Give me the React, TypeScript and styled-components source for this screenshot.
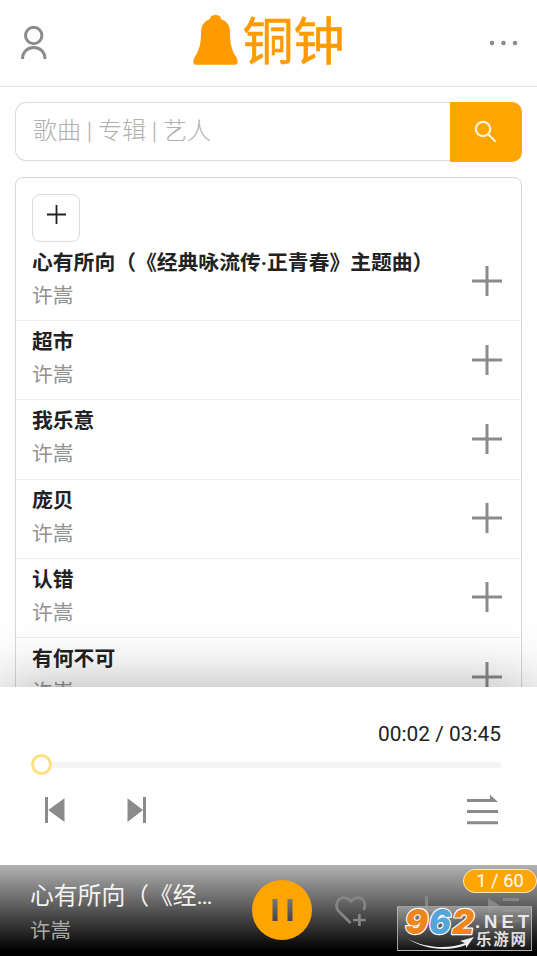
import React from "react";
import styled, { createGlobalStyle } from "styled-components";

const GlobalStyle = createGlobalStyle`
  * { box-sizing: border-box; }
  body { margin: 0; background: #fff; overflow: hidden; }
  button { padding: 0; font: inherit; cursor: pointer; }
  svg { display: block; overflow: visible; flex: none; }
`;

const Screen = styled.div`
  width: 537px;
  height: 956px;
  display: flex;
  flex-direction: column;
  overflow: hidden;
  background: #fefefe;
  font-family: Roboto, "Noto Sans CJK SC", sans-serif;
  text-spacing-trim: space-all;
  color: #222;
`;

const Header = styled.header`
  flex: none;
  height: 87px;
  border-bottom: 1px solid #e2e2e2;
  display: grid;
  grid-template-columns: 1fr auto 1fr;
  padding: 0 19px 0 20px;
`;

const HeaderButton = styled.button<{ $end?: boolean }>`
  border: 0;
  background: none;
  color: #8b8b8b;
  display: flex;
  align-items: center;
  justify-content: ${(p) => (p.$end ? "flex-end" : "flex-start")};
`;

const Brand = styled.div`
  display: flex;
  align-items: flex-start;
  padding-top: 14px;
  color: #ff9a00;
`;

const BrandName = styled.span`
  margin: -6px 0 0 4px;
  font: 400 51px/60px "Noto Sans CJK SC", sans-serif;
  -webkit-text-stroke: 0.6px currentColor;
`;

const Main = styled.main`
  flex: 1;
  min-height: 0;
  overflow: hidden;
  padding: 15px 15px 0;
`;

const SearchBar = styled.form`
  display: flex;
  height: 60px;
  margin-bottom: 15px;
`;

const SearchInput = styled.input`
  flex: 1;
  min-width: 0;
  height: 59px;
  border: 1px solid #dcdcdc;
  border-right: 0;
  border-radius: 11px 0 0 11px;
  padding: 0 17px 1px;
  background: #fff;
  font: 300 24px Roboto, "Noto Sans CJK SC", sans-serif;
  outline: none;
  &::placeholder { color: #b0b0b0; opacity: 1; }
`;

const SearchButton = styled.button`
  width: 72px;
  height: 60px;
  border: 0;
  border-radius: 0 10px 10px 0;
  background: #ffa500;
  display: flex;
  align-items: center;
  justify-content: center;
`;

const SongCard = styled.section`
  border: 1px solid #d3d8dc;
  border-radius: 8px 8px 0 0;
  padding-top: 16px;
  background: #fff;
`;

const AddAllButton = styled.button`
  display: flex;
  align-items: center;
  justify-content: center;
  width: 48px;
  height: 48px;
  margin-left: 16px;
  padding-bottom: 7px;
  border: 1px solid #dcdcdc;
  border-radius: 8px;
  background: #fff;
  color: #222;
`;

const SongRow = styled.div`
  height: 79.2px;
  border-bottom: 1px solid #eee;
  padding: 5px 19px 0 16px;
  display: flex;
  justify-content: space-between;
  align-items: center;
`;

const SongText = styled.div`
  align-self: flex-start;
`;

const SongTitle = styled.div`
  padding-top: 1px;
  font-size: 20.8px;
  line-height: 31px;
  font-weight: 700;
  white-space: nowrap;
`;

const SongArtist = styled.div`
  margin-top: 2px;
  font-size: 20.7px;
  line-height: 31px;
  font-weight: 400;
  color: #929292;
`;

const RowAdd = styled.button`
  border: 0;
  background: none;
  color: #8b8b8b;
  margin-bottom: 6px;
`;

const Player = styled.section`
  position: relative;
  flex: none;
  height: 178px;
  padding: 31px 36px 0 31px;
  background: #fff;
  box-shadow: 0 0 58px rgba(0, 0, 0, 0.33);
`;

const Time = styled.div`
  text-align: right;
  font-size: 20.9px;
  line-height: 32px;
  color: #222;
`;

const Seek = styled.div`
  display: flex;
  align-items: center;
  height: 21px;
  margin-top: 4px;
`;

const SeekThumb = styled.div`
  width: 21px;
  height: 21px;
  border: 3px solid #ffdf86;
  border-radius: 50%;
  background: #fff;
`;

const SeekTrack = styled.div`
  flex: 1;
  height: 6px;
  border-radius: 0 3px 3px 0;
  background: #f3f3f3;
`;

const Controls = styled.div`
  display: flex;
  align-items: center;
  height: 48px;
  margin-top: 11px;
  padding: 0 3px 0 13px;
  gap: 61px;
`;

const ControlButton = styled.button<{ $last?: boolean }>`
  border: 0;
  background: none;
  color: #8b8b8b;
  margin-left: ${(p) => (p.$last ? "auto" : "0")};
`;

const NowPlaying = styled.footer`
  position: relative;
  flex: none;
  height: 91px;
  display: flex;
  padding-left: 30px;
  background: linear-gradient(#b2b2b2 0, #000 94%);
`;

const NowText = styled.div`
  width: 184px;
  padding-top: 14px;
`;

const NowTitle = styled.div`
  font-size: 23.8px;
  line-height: 34px;
  font-weight: 400;
  color: #f4f4f4;
  white-space: nowrap;
  overflow: hidden;
  text-overflow: ellipsis;
`;

const NowArtist = styled.div`
  margin-top: 3px;
  font-size: 20.5px;
  line-height: 31px;
  font-weight: 400;
  color: #a9a9a9;
`;

const PauseButton = styled.button`
  width: 60px;
  height: 60px;
  margin: 15px 0 0 38px;
  border: 0;
  border-radius: 50%;
  background: #ffa500;
  display: flex;
  align-items: center;
  justify-content: center;
`;

const FavButton = styled.button`
  align-self: flex-start;
  margin: 31px 0 0 23px;
  border: 0;
  background: none;
`;

const QueueIcons = styled.div`
  margin: 31px 0 0 46px;
`;

const QueueBadge = styled.div`
  position: absolute;
  top: 4px;
  right: 0;
  width: 74px;
  height: 24px;
  border: 1.5px solid #ffe9bd;
  border-radius: 12px;
  background: #ffa500;
  color: #fff;
  font-size: 18.3px;
  line-height: 22px;
  text-align: center;
`;

const Watermark = styled.div`
  position: absolute;
  left: 397px;
  top: 41px;
  width: 135px;
  height: 45px;
  border: 1px solid rgba(190, 190, 190, 0.8);
  background: linear-gradient(rgba(162, 162, 162, 0.85), rgba(22, 22, 22, 0.85));
`;

const songs = [
  "心有所向（《经典咏流传·正青春》主题曲）",
  "超市",
  "我乐意",
  "庞贝",
  "认错",
  "有何不可",
];

const PlusIcon = ({ size, stroke }: { size: number; stroke: number }) => (
  <svg width={size} height={size} viewBox={`0 0 ${size} ${size}`} stroke="currentColor" strokeWidth={stroke}>
    <path d={`M0 ${size / 2}H${size}M${size / 2} 0V${size}`} />
  </svg>
);

const UserIcon = () => (
  <svg width="28" height="34" viewBox="0 0 28 34" fill="none" stroke="currentColor" strokeWidth="3">
    <circle cx="13.7" cy="9.5" r="8.2" />
    <path d="M2.5 33C2.5 17.5 25 17.5 25 33" />
  </svg>
);

const MoreIcon = () => (
  <svg width="29" height="6" viewBox="0 0 29 6" fill="currentColor">
    <circle cx="3" cy="3" r="2.3" />
    <circle cx="14.5" cy="3" r="2.3" />
    <circle cx="26" cy="3" r="2.3" />
  </svg>
);

const BellIcon = () => (
  <svg width="45" height="51" viewBox="0 0 45 51" fill="currentColor">
    <path d="M17 5C17 2.5 19 1 22.5 1S28 2.5 28 5C34 7 37 12 37 18C37 29 38 35 43.5 43.5C45.5 47.5 45 50.8 41.5 50.8H3.5C0 50.8-.5 47.5 1.5 43.5C7 35 8 29 8 18C8 12 11 7 17 5Z" />
  </svg>
);

const SearchIcon = () => (
  <svg width="22" height="22" viewBox="0 0 22 22" fill="none" stroke="#fff3d6" strokeWidth="2.2">
    <circle cx="8" cy="8" r="7.2" />
    <path d="M13 13L20.7 20.7" />
  </svg>
);

const PreviousIcon = () => (
  <svg width="21" height="26" viewBox="0 0 21 26" fill="currentColor">
    <path d="M1 0H4V26H1ZM20.5 1.3V25L4.2 13Z" />
  </svg>
);

const NextIcon = () => (
  <svg width="21" height="26" viewBox="0 0 21 26" fill="currentColor">
    <path d="M17 0H20V26H17ZM1.5 1.3V25L17 13Z" />
  </svg>
);

const PlaylistOrderIcon = () => (
  <svg width="31" height="30" viewBox="0 0 31 30" fill="currentColor">
    <path d="M0 4H23V-.3L31 6.9H0ZM0 15H31V18H0ZM0 26.2H31V29.2H0Z" />
  </svg>
);

const HeartPlusIcon = () => (
  <svg width="32" height="32" viewBox="0 0 32 32" fill="none" stroke="#858585" strokeWidth="2.7">
    <path d="M15.6 27L4.2 15.8C-1.4 9.6 2.8 1.7 9 1.7C11.8 1.7 13.9 2.9 16 5.3C18.1 2.9 20.6 1.7 23.2 1.7C28.8 1.7 31.4 8 28.7 14" />
    <path d="M18 24H30.8M24.4 17.9V30" />
  </svg>
);

const App = () => (
  <>
    <GlobalStyle />
    <Screen>
      <Header>
        <HeaderButton aria-label="用户"><UserIcon /></HeaderButton>
        <Brand>
          <BellIcon />
          <BrandName>铜钟</BrandName>
        </Brand>
        <HeaderButton $end aria-label="更多"><MoreIcon /></HeaderButton>
      </Header>

      <Main>
        <SearchBar onSubmit={(e) => e.preventDefault()}>
          <SearchInput placeholder="歌曲 | 专辑 | 艺人" />
          <SearchButton aria-label="搜索"><SearchIcon /></SearchButton>
        </SearchBar>
        <SongCard>
          <AddAllButton aria-label="全部添加"><PlusIcon size={19} stroke={1.8} /></AddAllButton>
          {songs.map((title) => (
            <SongRow key={title}>
              <SongText>
                <SongTitle>{title}</SongTitle>
                <SongArtist>许嵩</SongArtist>
              </SongText>
              <RowAdd aria-label="添加"><PlusIcon size={30} stroke={3} /></RowAdd>
            </SongRow>
          ))}
        </SongCard>
      </Main>

      <Player>
        <Time>00:02 / 03:45</Time>
        <Seek>
          <SeekThumb />
          <SeekTrack />
        </Seek>
        <Controls>
          <ControlButton aria-label="上一首"><PreviousIcon /></ControlButton>
          <ControlButton aria-label="下一首"><NextIcon /></ControlButton>
          <ControlButton $last aria-label="播放顺序"><PlaylistOrderIcon /></ControlButton>
        </Controls>
      </Player>

      <NowPlaying>
        <NowText>
          <NowTitle>心有所向（《经典咏流传·正青春》主题曲）</NowTitle>
          <NowArtist>许嵩</NowArtist>
        </NowText>
        <PauseButton aria-label="暂停">
          <svg width="21" height="22" viewBox="0 0 21 22">
            <defs>
              <linearGradient id="pause" x1="0" y1="0" x2="0" y2="1">
                <stop offset="0" stopColor="#777" />
                <stop offset="1" stopColor="#444" />
              </linearGradient>
            </defs>
            <path d="M.5 0H5.5V22H.5ZM15.5 0H20.5V22H15.5Z" fill="url(#pause)" />
          </svg>
        </PauseButton>
        <FavButton aria-label="收藏"><HeartPlusIcon /></FavButton>
        <QueueIcons>
          <svg width="110" height="31" viewBox="0 0 110 31" fill="#868686">
            <path d="M12 0H15V13H30V16H15V30H12V16H-2V13H12ZM75 2L87 9.5L75 17ZM90 2H106V5H90ZM90 13H106V16H90ZM75 24H106V27H75Z" />
          </svg>
        </QueueIcons>
        <QueueBadge>1 / 60</QueueBadge>
        <Watermark>
          <svg width="133" height="43" viewBox="0 0 133 43">
            <path d="M8 31C29 42 51 42 67 36L62 34L76 30L68 41L68 38C50 45 27 43 8 31Z" fill="#eee" />
            <g fontFamily="Inter, sans-serif" fontWeight="900" fontStyle="italic" fontSize="34" stroke="#fff" strokeWidth="2.4" strokeLinejoin="round" paintOrder="stroke">
              <text x="7" y="27" textLength="23" lengthAdjust="spacingAndGlyphs" fill="#ef851d">9</text>
              <text x="31" y="27" textLength="22" lengthAdjust="spacingAndGlyphs" fill="#55a5db">6</text>
              <text x="54" y="27" textLength="22" lengthAdjust="spacingAndGlyphs" fill="#ef851d">2</text>
            </g>
            <text x="77" y="21" fontFamily="Liberation Sans" fontWeight="700" fontSize="18.5" textLength="54" lengthAdjust="spacing" fill="#e8e8e8">.NET</text>
            <text x="78" y="38" fontFamily="Noto Sans CJK SC" fontWeight="700" fontSize="15.5" textLength="50" lengthAdjust="spacing" fill="#dedede">乐游网</text>
          </svg>
        </Watermark>
      </NowPlaying>
    </Screen>
  </>
);

export default App;
